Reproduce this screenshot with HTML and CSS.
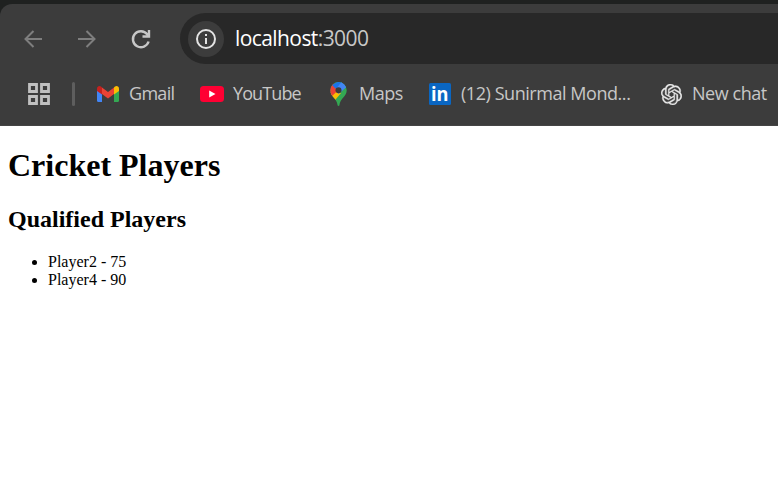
FILE: index.html
```html
<!DOCTYPE html>
<html lang="en">
<head>
<meta charset="utf-8">
<title>Cricket Players</title>
<link rel="stylesheet" href="styles.css">
</head>
<body>
<div class="tabstrip">
<header class="browser">
  <nav class="toolbar">
    <svg class="nav-icon dim" viewBox="0 0 24 24"><path d="M21 12H4.500M12.500 4l-8 8 8 8"/></svg>
    <svg class="nav-icon dim" viewBox="0 0 24 24"><path d="M3 12h16.500M11.500 4l8 8-8 8"/></svg>
    <svg class="nav-icon" viewBox="0 0 24 24"><path class="arc" d="M19.600 14.500A8 8 0 1 1 18.200 7.200L19.500 8.700M20 3v6.500h-6.500"/></svg>
    <div class="address">
      <span class="info"><svg viewBox="0 0 22 22"><circle cx="11" cy="11" r="9"/><path d="M11 10v6M11 6v2"/></svg></span>
      <span class="url"><span class="host">localhost</span>:3000</span>
    </div>
  </nav>
  <nav class="bookmarks">
    <svg class="apps" viewBox="0 0 22 22"><path d="M1.500 1.500h7v7h-7zM13.500 1.500h7v7h-7zM1.500 13.500h7v7h-7zM13.500 13.500h7v7h-7z"/></svg>
    <span class="divider"></span>
    <a class="bookmark gmail">
      <svg width="22" height="16" viewBox="0 0 22 16"><path fill="#4285f4" d="M0 3l5 3.500V16H1.500A1.500 1.500 0 0 1 0 14.500z"/><path fill="#34a853" d="M17 6.500L22 3v11.500a1.500 1.500 0 0 1-1.500 1.500H17z"/><path fill="#fbbc04" d="M17 1.500l1-.9C19.600-.7 22 .4 22 2.500V5l-5 3.500z"/><path fill="#c5221f" d="M0 2.500C0 .4 2.400-.7 4 .6l1 .9v7L0 5z"/><path fill="#ea4335" d="M5 1.500L11 6l6-4.500v6.600l-6 4.300-6-4.300z"/></svg>
      <span>Gmail</span>
    </a>
    <a class="bookmark youtube">
      <svg width="24" height="16" viewBox="0 0 24 16"><rect width="24" height="16" rx="3.500" fill="#ff0033"/><path fill="#fff" d="M9.200 4.500v7l6.300-3.500z"/></svg>
      <span>YouTube</span>
    </a>
    <a class="bookmark maps">
      <svg width="17" height="24" viewBox="0 0 17 24"><defs><clipPath id="pin"><path d="M8.500 0A8.200 8.200 0 0 0 .3 8.200c0 6.300 6.500 8 7.300 15 .1.900 1.700.9 1.800 0 .8-7 7.300-8.700 7.300-15A8.200 8.200 0 0 0 8.500 0z"/></clipPath></defs><g clip-path="url(#pin)"><path fill="#34a853" d="M0 0h17v24H0z"/><path fill="#fbbc04" d="M0 11l5-4 6 4L3 20.500H0z"/><path fill="#ea4335" d="M0 0h3l5.500 8L1.500 14.500H0z"/><path fill="#1a73e8" d="M2 3L7 0h5L7 8z"/><path fill="#4285f4" d="M11.500 0H17v4.500L8.500 12 6 7z"/></g><circle cx="8.500" cy="8.200" r="3" fill="#3c3c3c"/></svg>
      <span>Maps</span>
    </a>
    <a class="bookmark linkedin">
      <svg width="22" height="22" viewBox="0 0 22 22"><rect width="22" height="22" rx="1.500" fill="#0a66c2"/><text x="2" y="17.500" textLength="17.500" lengthAdjust="spacingAndGlyphs">in</text></svg>
      <span>(12) Sunirmal Mond...</span>
    </a>
    <a class="bookmark chat">
      <svg width="21" height="21" viewBox="0 0 24 24"><path fill="#e8e8e8" stroke="#e8e8e8" stroke-width=".4" d="M22.282 9.821a5.985 5.985 0 0 0-.516-4.911 6.046 6.046 0 0 0-6.510-2.900A6.065 6.065 0 0 0 4.981 4.182a5.985 5.985 0 0 0-3.998 2.900 6.046 6.046 0 0 0 .743 7.097 5.980 5.980 0 0 0 .511 4.911 6.051 6.051 0 0 0 6.515 2.900A5.985 5.985 0 0 0 13.260 24a6.056 6.056 0 0 0 5.772-4.206 5.989 5.989 0 0 0 3.998-2.900 6.056 6.056 0 0 0-.748-7.073zm-9.022 12.608a4.476 4.476 0 0 1-2.876-1.041l.142-.080 4.778-2.758a.795.795 0 0 0 .393-.681v-6.737l2.020 1.169a.071.071 0 0 1 .038.052v5.583a4.504 4.504 0 0 1-4.495 4.494zm-9.661-4.125a4.471 4.471 0 0 1-.535-3.014l.142.085 4.783 2.758a.771.771 0 0 0 .781 0l5.843-3.369v2.332a.080.080 0 0 1-.033.062L9.740 19.950a4.499 4.499 0 0 1-6.141-1.646zM2.341 7.896a4.485 4.485 0 0 1 2.366-1.973V11.600a.766.766 0 0 0 .388.677l5.814 3.354-2.020 1.169a.076.076 0 0 1-.071 0l-4.830-2.787A4.504 4.504 0 0 1 2.341 7.872zm16.596 3.856L13.104 8.364 15.119 7.200a.076.076 0 0 1 .071 0l4.830 2.791a4.494 4.494 0 0 1-.677 8.104v-5.677a.790.790 0 0 0-.407-.667zm2.011-3.023l-.142-.085-4.774-2.782a.776.776 0 0 0-.785 0L9.409 9.230V6.897a.066.066 0 0 1 .028-.062l4.830-2.787a4.499 4.499 0 0 1 6.680 4.660zM8.307 12.863l-2.020-1.164a.080.080 0 0 1-.038-.057V6.074a4.499 4.499 0 0 1 7.376-3.454l-.142.081L8.704 5.459a.795.795 0 0 0-.393.681zm1.098-2.365l2.602-1.500 2.607 1.500v2.999l-2.597 1.500-2.607-1.500z"/></svg>
      <span>New chat</span>
    </a>
  </nav>
</header>
</div>
<main>
  <h1>Cricket Players</h1>
  <h2>Qualified Players</h2>
  <ul>
    <li>Player2 - 75</li>
    <li>Player4 - 90</li>
  </ul>
</main>
</body>
</html>
```
FILE: styles.css
```css
* { box-sizing: border-box; }
body { margin: 0; height: 478px; overflow: hidden; background: #fff; color: #000; font-family: "Liberation Serif", serif; font-size: 16px; }
.tabstrip { height: 126px; padding-top: 4px; background: #1f2120; }
.browser { height: 122px; padding-top: 9px; overflow: hidden; background: #3c3c3c; border-bottom: 1px solid #454545; border-radius: 12px 0 0 0; }
svg { display: block; flex: none; }
.toolbar { display: flex; align-items: center; height: 51px; padding-left: 21px; }
.nav-icon { width: 24px; height: 24px; margin-right: 30px; fill: none; stroke: #c7c7c7; stroke-width: 2; }
.nav-icon.dim { stroke: #7e7e7e; }
.arc { stroke-width: 2.4; }
.address { display: flex; flex: 1; align-items: center; height: 51px; margin-left: -3px; padding-left: 8px; border-radius: 26px 0 0 26px; background: #282828; }
.info { display: grid; place-items: center; width: 36px; height: 36px; border-radius: 50%; background: #3c3c3c; }
.info svg { width: 22px; height: 22px; fill: none; stroke: #e3e3e3; stroke-width: 2; }
.url { margin-left: 11px; padding-bottom: 1px; color: #c7c7c7; font-family: "Open Sans", sans-serif; font-size: 21px; letter-spacing: -0.58px; white-space: nowrap; }
.host { color: #fff; }
.bookmarks { display: flex; align-items: center; height: 60px; padding-left: 28px; }
.apps { width: 22px; height: 22px; fill: none; stroke: #c0c0c0; stroke-width: 2.8; }
.divider { flex: none; width: 3px; height: 24px; margin: 0 22px 0 22px; border-radius: 2px; background: #5e5e5e; }
.bookmark { display: flex; flex: none; align-items: center; gap: 10px; color: #c7c7c7; font-family: "Open Sans", sans-serif; font-size: 18px; letter-spacing: -0.45px; white-space: nowrap; }
.bookmark span { line-height: 24px; padding-bottom: 2px; }
.gmail { width: 103px; letter-spacing: -0.7px; }
.youtube { width: 130px; gap: 9px; letter-spacing: -0.9px; }
.maps { width: 99px; gap: 12px; }
.linkedin { width: 232px; }
.linkedin text { fill: #fff; font: 700 19px "Open Sans", sans-serif; letter-spacing: 0; }
.chat { width: 117px; }
main { padding: 0 8px; }
h1 { margin: 21px 0 0; font-size: 32px; line-height: 37px; }
h2 { margin: 22px 0 0; font-size: 24px; line-height: 27px; }
ul { margin: 20px 0 0; padding-left: 40px; line-height: 18px; }
```
